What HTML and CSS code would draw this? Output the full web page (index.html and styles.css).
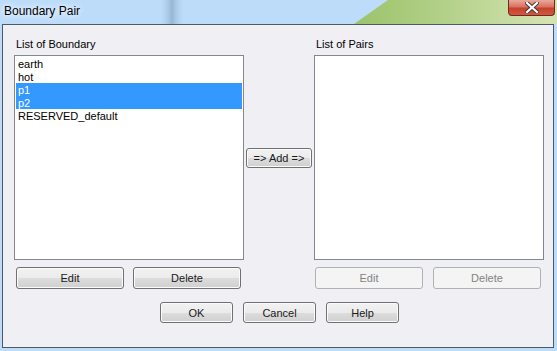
FILE: index.html
```html
<!DOCTYPE html>
<html lang="en">
<head>
    <meta charset="UTF-8">
    <title>Boundary Pair</title>
    <link rel="stylesheet" href="styles.css">
</head>
<body>
    <div class="window">
        <div class="titlebar">
            <svg class="desktop" width="557" height="24" viewBox="0 0 557 24">
                <defs>
                    <linearGradient id="hill" x1="0" y1="0" x2="1" y2="0">
                        <stop offset="0" stop-color="#9cc26b"/>
                        <stop offset="0.45" stop-color="#b3d189"/>
                        <stop offset="1" stop-color="#d6e4b4"/>
                    </linearGradient>
                    <linearGradient id="streak" x1="0" y1="0" x2="1" y2="0">
                        <stop offset="0" stop-color="#bcdcfa" stop-opacity="0"/>
                        <stop offset="0.5" stop-color="#97b6d4"/>
                        <stop offset="1" stop-color="#bcdcfa" stop-opacity="0"/>
                    </linearGradient>
                </defs>
                <rect x="0" y="0" width="557" height="24" fill="#bcdcfa"/>
                <rect x="158" y="0" width="28" height="24" fill="url(#streak)"/>
                <polygon points="354,24 388,0 557,0 557,24" fill="url(#hill)"/>
            </svg>
            <span class="title">Boundary Pair</span>
            <div class="close">
                <svg width="14" height="11" viewBox="0 0 14 11">
                    <path d="M2 1 L12 10 M12 1 L2 10" stroke="#3a3a3a" stroke-width="4" stroke-linecap="square"/>
                    <path d="M2 1 L12 10 M12 1 L2 10" stroke="#ffffff" stroke-width="2.2" stroke-linecap="square"/>
                </svg>
            </div>
        </div>

        <div class="client">
            <div class="columns">
                <div class="col">
                    <div class="label">List of Boundary</div>
                    <div class="listbox">
                        <div class="item">earth</div>
                        <div class="item">hot</div>
                        <div class="item selected">p1</div>
                        <div class="item selected">p2</div>
                        <div class="item">RESERVED_default</div>
                    </div>
                    <div class="btn-row left-row">
                        <button class="btn wide">Edit</button>
                        <button class="btn wide">Delete</button>
                    </div>
                </div>

                <div class="mid">
                    <button class="btn add">=&gt; Add =&gt;</button>
                </div>

                <div class="col">
                    <div class="label">List of Pairs</div>
                    <div class="listbox"></div>
                    <div class="btn-row right-row">
                        <button class="btn wide" disabled>Edit</button>
                        <button class="btn wide" disabled>Delete</button>
                    </div>
                </div>
            </div>

            <div class="footer">
                <button class="btn small">OK</button>
                <button class="btn small">Cancel</button>
                <button class="btn small">Help</button>
            </div>
        </div>
    </div>
</body>
</html>
```

FILE: styles.css
```css
body {
    margin: 0;
    width: 557px;
    height: 351px;
    overflow: hidden;
    background-color: #bcdcfa; /* glass frame showing desktop */
    font-family: "Liberation Sans", Arial, sans-serif;
    font-size: 11px;
}

.window {
    display: flex;
    flex-direction: column;
    height: 351px;
    padding: 0 3px 3px 2px;
    box-sizing: border-box;
}

.titlebar {
    position: relative;
    height: 24px;
    margin: 0 -3px 0 -2px;
    display: flex;
    align-items: center;
}

.desktop {
    position: absolute;
    left: 0;
    top: 0;
}

.title {
    position: relative;
    margin-left: 4px;
    margin-top: -3px;
    font-size: 12px;
    color: #000;
    text-shadow: 0 0 6px #fff, 0 0 8px #fff;
}

.close {
    position: absolute;
    left: 508px;
    top: 0;
    width: 45px;
    height: 15px;
    border: 1px solid #6b2a22;
    border-top: none;
    border-radius: 0 0 4px 4px;
    background: linear-gradient(#e9a99b 0%, #d9725f 45%, #c7412b 55%, #d2583f 100%);
    display: flex;
    align-items: center;
    justify-content: center;
}

.client {
    flex: 1;
    background-color: #f0eff3;
    border: 1px solid #4d5965;
    padding: 13px 0 0 11px;
}

.columns {
    display: flex;
}

.col {
    width: 230px;
    display: flex;
    flex-direction: column;
}

.label {
    height: 13px;
    line-height: 13px;
    padding-left: 2px;
    margin-bottom: 4px;
}

.listbox {
    height: 205px;
    box-sizing: border-box;
    border: 1px solid #828790;
    background-color: #fff;
    padding: 1px;
}

.item {
    height: 12px;
    line-height: 13px;
    padding: 1px 0 0 2px;
    white-space: nowrap;
}

.item.selected {
    background-color: #3399ff;
    color: #fff;
}

.mid {
    width: 70px;
    display: flex;
    justify-content: center;
    align-items: flex-start;
    padding-top: 110px;
}

.btn {
    font-family: inherit;
    font-size: 11px;
    font-weight: normal;
    color: #1a1a1a;
    border: 1px solid #707070;
    border-radius: 3px;
    background: linear-gradient(#f2f2f2 0%, #ebebeb 50%, #dddddd 51%, #cfcfcf 100%);
    box-shadow: inset 0 0 0 1px #fbfbfb;
    padding: 0;
    margin: 0;
}

.btn:disabled {
    color: #838383;
    border-color: #adb2b5;
    background: #f4f4f4;
    box-shadow: none;
}

.add {
    width: 66px;
    height: 20px;
}

.btn-row {
    display: flex;
    margin-top: 7px;
}

.left-row {
    padding-left: 2px;
    gap: 9px;
}

.right-row {
    padding-left: 1px;
    gap: 10px;
}

.wide {
    width: 108px;
    height: 22px;
}

.footer {
    display: flex;
    gap: 10px;
    margin-top: 13px;
    padding-left: 146px;
}

.small {
    width: 73px;
    height: 21px;
}
```
